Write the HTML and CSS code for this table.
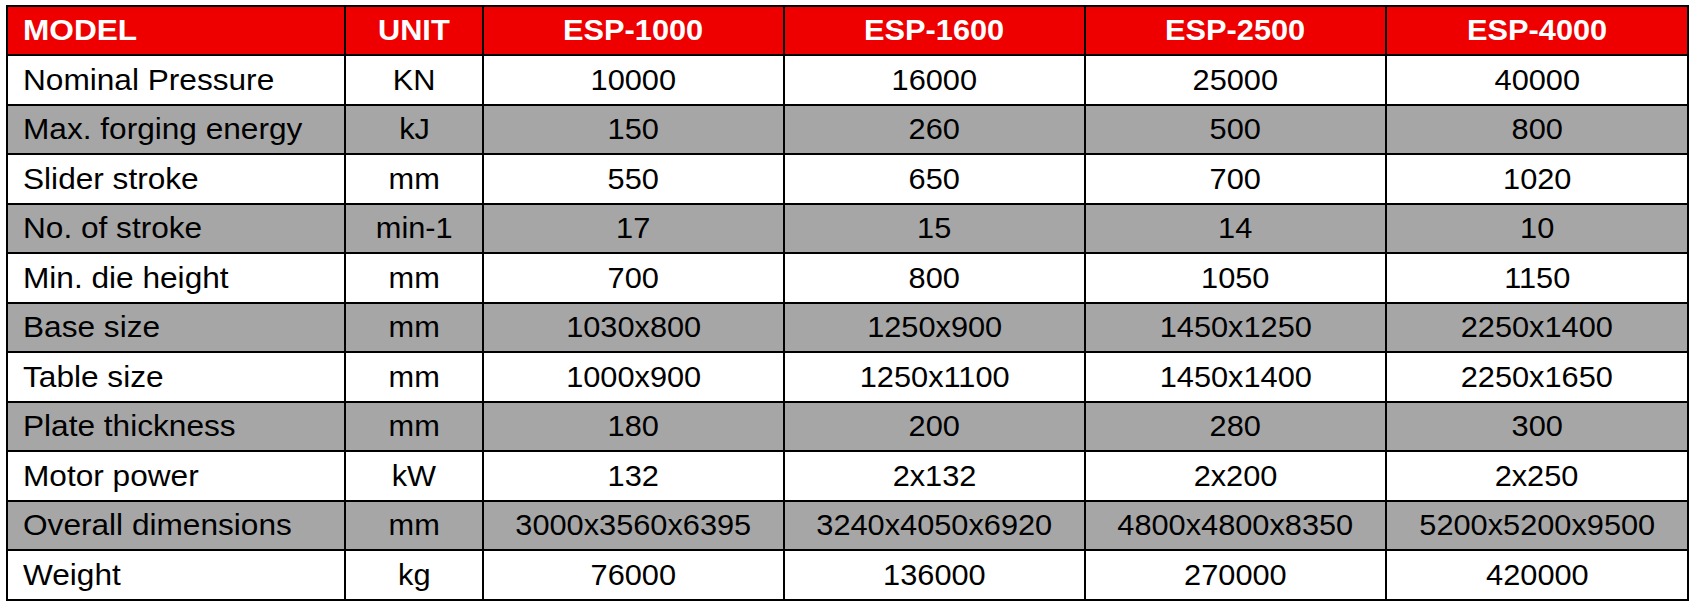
FILE: index.html
```html
<!DOCTYPE html>
<html>
<head>
<meta charset="utf-8">
<link rel="stylesheet" href="styles.css">
</head>
<body>
<div class="spec">
  <div class="row head">
    <div class="cell first"><span class="t">MODEL</span></div>
    <div class="cell"><span class="t">UNIT</span></div>
    <div class="cell"><span class="t">ESP-1000</span></div>
    <div class="cell"><span class="t">ESP-1600</span></div>
    <div class="cell"><span class="t">ESP-2500</span></div>
    <div class="cell"><span class="t">ESP-4000</span></div>
  </div>
  <div class="row">
    <div class="cell first"><span class="t">Nominal Pressure</span></div>
    <div class="cell"><span class="t">KN</span></div>
    <div class="cell"><span class="t">10000</span></div>
    <div class="cell"><span class="t">16000</span></div>
    <div class="cell"><span class="t">25000</span></div>
    <div class="cell"><span class="t">40000</span></div>
  </div>
  <div class="row alt">
    <div class="cell first"><span class="t">Max. forging energy</span></div>
    <div class="cell"><span class="t">kJ</span></div>
    <div class="cell"><span class="t">150</span></div>
    <div class="cell"><span class="t">260</span></div>
    <div class="cell"><span class="t">500</span></div>
    <div class="cell"><span class="t">800</span></div>
  </div>
  <div class="row">
    <div class="cell first"><span class="t">Slider stroke</span></div>
    <div class="cell"><span class="t">mm</span></div>
    <div class="cell"><span class="t">550</span></div>
    <div class="cell"><span class="t">650</span></div>
    <div class="cell"><span class="t">700</span></div>
    <div class="cell"><span class="t">1020</span></div>
  </div>
  <div class="row alt">
    <div class="cell first"><span class="t">No. of stroke</span></div>
    <div class="cell"><span class="t">min-1</span></div>
    <div class="cell"><span class="t">17</span></div>
    <div class="cell"><span class="t">15</span></div>
    <div class="cell"><span class="t">14</span></div>
    <div class="cell"><span class="t">10</span></div>
  </div>
  <div class="row">
    <div class="cell first"><span class="t">Min. die height</span></div>
    <div class="cell"><span class="t">mm</span></div>
    <div class="cell"><span class="t">700</span></div>
    <div class="cell"><span class="t">800</span></div>
    <div class="cell"><span class="t">1050</span></div>
    <div class="cell"><span class="t">1150</span></div>
  </div>
  <div class="row alt">
    <div class="cell first"><span class="t">Base size</span></div>
    <div class="cell"><span class="t">mm</span></div>
    <div class="cell"><span class="t">1030x800</span></div>
    <div class="cell"><span class="t">1250x900</span></div>
    <div class="cell"><span class="t">1450x1250</span></div>
    <div class="cell"><span class="t">2250x1400</span></div>
  </div>
  <div class="row">
    <div class="cell first"><span class="t">Table size</span></div>
    <div class="cell"><span class="t">mm</span></div>
    <div class="cell"><span class="t">1000x900</span></div>
    <div class="cell"><span class="t">1250x1100</span></div>
    <div class="cell"><span class="t">1450x1400</span></div>
    <div class="cell"><span class="t">2250x1650</span></div>
  </div>
  <div class="row alt">
    <div class="cell first"><span class="t">Plate thickness</span></div>
    <div class="cell"><span class="t">mm</span></div>
    <div class="cell"><span class="t">180</span></div>
    <div class="cell"><span class="t">200</span></div>
    <div class="cell"><span class="t">280</span></div>
    <div class="cell"><span class="t">300</span></div>
  </div>
  <div class="row">
    <div class="cell first"><span class="t">Motor power</span></div>
    <div class="cell"><span class="t">kW</span></div>
    <div class="cell"><span class="t">132</span></div>
    <div class="cell"><span class="t">2x132</span></div>
    <div class="cell"><span class="t">2x200</span></div>
    <div class="cell"><span class="t">2x250</span></div>
  </div>
  <div class="row alt">
    <div class="cell first"><span class="t">Overall dimensions</span></div>
    <div class="cell"><span class="t">mm</span></div>
    <div class="cell"><span class="t">3000x3560x6395</span></div>
    <div class="cell"><span class="t">3240x4050x6920</span></div>
    <div class="cell"><span class="t">4800x4800x8350</span></div>
    <div class="cell"><span class="t">5200x5200x9500</span></div>
  </div>
  <div class="row">
    <div class="cell first"><span class="t">Weight</span></div>
    <div class="cell"><span class="t">kg</span></div>
    <div class="cell"><span class="t">76000</span></div>
    <div class="cell"><span class="t">136000</span></div>
    <div class="cell"><span class="t">270000</span></div>
    <div class="cell"><span class="t">420000</span></div>
  </div>
</div>
</body>
</html>
```
FILE: styles.css
```css
html, body {
  margin: 0;
  padding: 0;
  background: #ffffff;
}

body {
  padding: 5px 0 0 6px;
  font-family: "Liberation Sans", Arial, sans-serif;
  font-size: 29px;
  color: #000000;
}

.spec {
  display: grid;
  width: 1683px;
  box-sizing: border-box;
  grid-template-columns: 336px 136px 299px 299px 299px 300px;
  grid-template-rows: repeat(6, 47px 48px);
  gap: 2px;
  padding: 2px;
  background: #000000;
}

.row {
  display: contents;
}

.cell {
  display: flex;
  align-items: center;
  justify-content: center;
  background: #ffffff;
  white-space: nowrap;
  overflow: hidden;
}

.cell.first {
  justify-content: flex-start;
  padding-left: 15px;
}

.row.alt .cell {
  background: #a6a6a6;
}

.row.head .cell {
  background: #ee0000;
  color: #ffffff;
  font-weight: bold;
}

.t {
  display: inline-block;
  transform: scaleX(1.06);
  transform-origin: center;
}

.cell.first .t {
  transform: scaleX(1.09);
  transform-origin: left center;
}
```
